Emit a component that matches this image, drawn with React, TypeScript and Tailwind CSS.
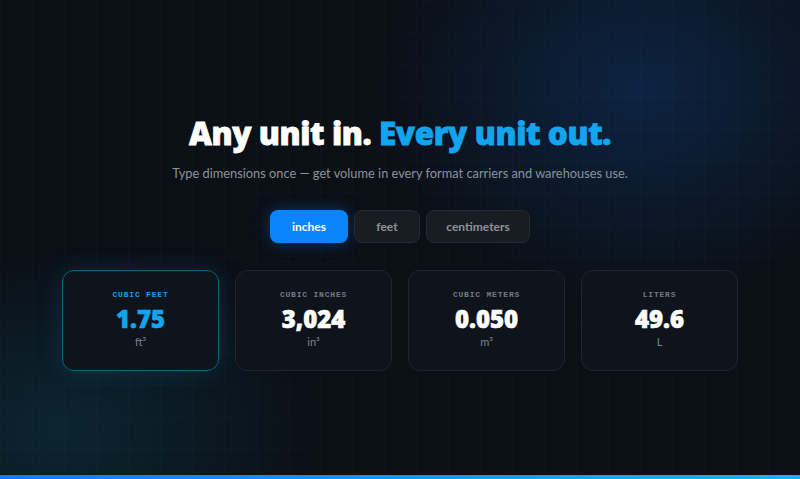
import React, { useState } from 'react';

type Unit = 'inches' | 'feet' | 'centimeters';

const units: { id: Unit; w: string }[] = [
  { id: 'inches', w: 'w-[78px]' },
  { id: 'feet', w: 'w-[66px]' },
  { id: 'centimeters', w: 'w-[104px]' },
];

const results = [
  { label: 'Cubic feet', value: '1.75', unit: 'ft³', primary: true },
  { label: 'Cubic inches', value: '3,024', unit: 'in³' },
  { label: 'Cubic meters', value: '0.050', unit: 'm³' },
  { label: 'Liters', value: '49.6', unit: 'L' },
];

export default function App() {
  const [unit, setUnit] = useState<Unit>('inches');

  return (
    <div className="relative min-h-screen h-[479px] overflow-hidden bg-[#0b0f16] font-['Lato',sans-serif] text-white">
      {/* glows */}
      <div className="pointer-events-none absolute -top-[120px] left-[380px] h-[420px] w-[520px] rounded-full bg-[radial-gradient(closest-side,rgba(14,56,110,0.5),rgba(14,56,110,0))]" />
      <div className="pointer-events-none absolute top-[250px] -left-[200px] h-[360px] w-[520px] rounded-full bg-[radial-gradient(closest-side,rgba(12,70,90,0.4),rgba(12,70,90,0))]" />
      {/* faint grid */}
      <div className="pointer-events-none absolute inset-0 bg-[linear-gradient(rgba(255,255,255,0.01)_1px,transparent_1px),linear-gradient(90deg,rgba(255,255,255,0.01)_1px,transparent_1px)] bg-[size:32px_32px]" />

      <div className="relative flex flex-col items-center pt-[112px]">
        <h1 className="font-['Noto_Sans',sans-serif] text-[31.5px] font-black leading-[42px] tracking-[-0.4px] [-webkit-text-stroke-width:0.8px]">
          Any unit in. <span className="text-[#12a5ee]">Every unit out.</span>
        </h1>
        <p className="mt-[10px] text-[12.8px] leading-[18px] text-[#8b929c]">
          Type dimensions once — get volume in every format carriers and warehouses use.
        </p>

        <div className="mt-[28px] flex gap-[6px]">
          {units.map((u) => (
            <button
              key={u.id}
              onClick={() => setUnit(u.id)}
              className={
                u.id === unit
                  ? `h-[33px] ${u.w} rounded-[8px] bg-[#0a84ff] text-[12px] font-bold text-white shadow-[0_0_16px_rgba(10,132,255,0.35)]`
                  : `h-[33px] ${u.w} rounded-[8px] border border-[#262b33] bg-[#181c23] text-[12px] font-bold text-[#8d939c]`
              }
            >
              {u.id}
            </button>
          ))}
        </div>

        <div className="mt-[27px] grid grid-cols-4 gap-[16px]">
          {results.map((r) => (
            <div
              key={r.label}
              className={
                r.primary
                  ? 'flex h-[101px] w-[157px] flex-col items-center rounded-[12px] border border-[#0c6088] bg-[#0f131b] pt-[19px] shadow-[0_0_24px_rgba(14,140,200,0.2)]'
                  : 'flex h-[101px] w-[157px] flex-col items-center rounded-[12px] border border-[#20252e] bg-[#0f131b] pt-[19px]'
              }
            >
              <div
                className={`font-['Liberation_Mono',monospace] text-[8px] font-bold uppercase leading-[10px] tracking-[0.8px] ${
                  r.primary ? 'text-[#0ea0e6]' : 'text-[#737a85]'
                }`}
              >
                {r.label}
              </div>
              <div
                className={`mt-[4px] font-['Noto_Sans',sans-serif] text-[24px] font-black leading-[30px] [-webkit-text-stroke-width:0.6px] ${
                  r.primary ? 'text-[#12a5ee]' : 'text-white'
                }`}
              >
                {r.value}
              </div>
              <div className="mt-[1px] text-[11px] leading-[14px] text-[#7d848e]">{r.unit}</div>
            </div>
          ))}
        </div>
      </div>

      <div className="absolute bottom-0 left-0 h-[4px] w-full bg-[linear-gradient(90deg,#0a7cff,#16b2f2)]" />
    </div>
  );
}
